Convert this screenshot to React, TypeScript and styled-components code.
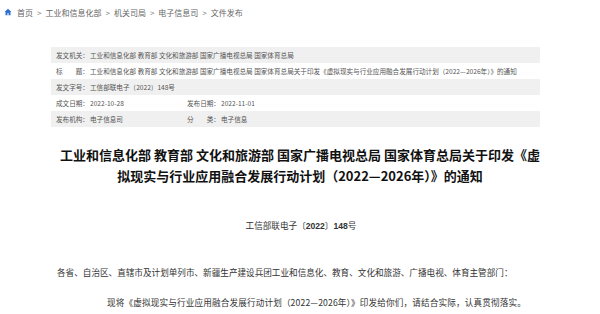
import React from "react";
import styled, { createGlobalStyle } from "styled-components";

const Global = createGlobalStyle`
  html, body { margin: 0; padding: 0; background: #fff; }
  body { font-family: "Noto Sans CJK SC", "Noto Sans", sans-serif; width: 600px; height: 314px; overflow: hidden; }
`;

const Page = styled.div`
  display: flex;
  flex-direction: column;
  width: 600px;
`;

const Crumbs = styled.nav`
  display: flex;
  align-items: center;
  height: 24px;
  padding-left: 4px;
  font-size: 8px;
  color: #666;
  gap: 3px;
`;

const Sep = styled.span`
  color: #777;
  margin: 0 1px;
`;

const Meta = styled.div`
  margin: 23px 0 0 51px;
  width: 489px;
  display: flex;
  flex-direction: column;
  font-size: 6.6px;
  color: #555;
`;

const MetaRow = styled.div<{ $shade: boolean }>`
  display: flex;
  align-items: center;
  height: 16px;
  padding-left: 5px;
  background: ${(p) => (p.$shade ? "#f0f0f0" : "transparent")};
  white-space: nowrap;
`;

const MetaCell = styled.div<{ $w?: number }>`
  display: flex;
  width: ${(p) => (p.$w ? `${p.$w}px` : "auto")};
`;

const Label = styled.span`
  width: 34px;
  flex: none;
`;

const Title = styled.h1`
  margin: 17px 0 0;
  font-size: 13px;
  line-height: 21px;
  font-weight: 700;
  color: #111;
  text-align: center;
`;

const DocNo = styled.div`
  margin-top: 32px;
  text-align: center;
  font-size: 8.6px;
  line-height: 14px;
  color: #333;
  padding-left: 2px;
`;

const Num = styled.b`
  font-weight: 700;
  font-family: "Liberation Sans", "Noto Sans CJK SC", sans-serif;
`;

const Body = styled.div`
  margin: 24px 0 0 57px;
  width: 470px;
  font-size: 8.6px;
  line-height: 30px;
  color: #333;
`;

const Para = styled.p<{ $indent?: number }>`
  margin: 0;
  white-space: nowrap;
  text-indent: ${(p) => p.$indent ?? 0}px;
  letter-spacing: ${(p) => (p.$indent ? "0.15px" : "0")};
`;

const HomeIcon = () => (
  <svg width="8" height="8" viewBox="0 0 16 16" style={{ marginRight: 2 }}>
    <path d="M8 1.5 1 8h2v6.5h4V10h2v4.5h4V8h2z" fill="#2f6fcf" />
  </svg>
);

const crumbs = ["首页", "工业和信息化部", "机关司局", "电子信息司", "文件发布"];

export default function App() {
  return (
    <Page>
      <Global />
      <Crumbs>
        <HomeIcon />
        {crumbs.map((c, i) => (
          <React.Fragment key={c}>
            {i > 0 && <Sep>&gt;</Sep>}
            <span>{c}</span>
          </React.Fragment>
        ))}
      </Crumbs>
      <Meta>
        <MetaRow $shade>
          <Label>发文机关：</Label>
          <span>工业和信息化部 教育部 文化和旅游部 国家广播电视总局 国家体育总局</span>
        </MetaRow>
        <MetaRow $shade={false}>
          <Label>标　　题：</Label>
          <span>
            工业和信息化部 教育部 文化和旅游部 国家广播电视总局 国家体育总局关于印发《虚拟现实与行业应用融合发展行动计划（2022—2026年）》的通知
          </span>
        </MetaRow>
        <MetaRow $shade>
          <Label>发文字号：</Label>
          <span>工信部联电子〔2022〕148号</span>
        </MetaRow>
        <MetaRow $shade={false}>
          <MetaCell $w={131}>
            <Label>成文日期：</Label>
            <span>2022-10-28</span>
          </MetaCell>
          <MetaCell>
            <Label>发布日期：</Label>
            <span>2022-11-01</span>
          </MetaCell>
        </MetaRow>
        <MetaRow $shade>
          <MetaCell $w={131}>
            <Label>发布机构：</Label>
            <span>电子信息司</span>
          </MetaCell>
          <MetaCell>
            <Label>分　　类：</Label>
            <span>电子信息</span>
          </MetaCell>
        </MetaRow>
      </Meta>
      <Title>
        工业和信息化部 教育部 文化和旅游部 国家广播电视总局 国家体育总局关于印发《虚
        <br />
        拟现实与行业应用融合发展行动计划（2022—2026年）》的通知
      </Title>
      <DocNo>
        工信部联电子〔<Num>2022</Num>〕<Num>148</Num>号
      </DocNo>
      <Body>
        <Para>
          各省、自治区、直辖市及计划单列市、新疆生产建设兵团工业和信息化、教育、文化和旅游、广播电视、体育主管部门：
        </Para>
        <Para $indent={50}>
          现将《虚拟现实与行业应用融合发展行动计划（2022—2026年）》印发给你们，请结合实际，认真贯彻落实。
        </Para>
      </Body>
    </Page>
  );
}
